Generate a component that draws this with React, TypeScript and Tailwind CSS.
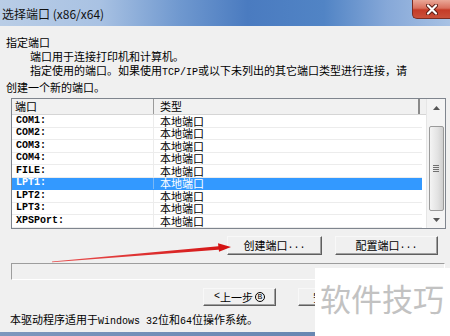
import React from "react";

const cjk = '"Noto Sans CJK SC", "Liberation Sans", sans-serif';

const ports = ["COM1:", "COM2:", "COM3:", "COM4:", "FILE:", "LPT1:", "LPT2:", "LPT3:", "XPSPort:"];

const Mono = ({ children }: { children: React.ReactNode }) => (
  <span className="font-['Liberation_Mono',monospace] text-[10px]">{children}</span>
);

const WinButton = ({ children, className = "" }: { children: React.ReactNode; className?: string }) => (
  <div
    className={`flex items-center justify-center bg-[#f0f0f0] border border-t-[#f8f8f8] border-l-[#f8f8f8] border-r-[#5f5f5f] border-b-[#5f5f5f] shadow-[inset_-1px_-1px_0_#a0a0a0] text-[11px] leading-none ${className}`}
  >
    {children}
  </div>
);

export default function App() {
  return (
    <div
      className="relative w-[450px] h-[336px] overflow-hidden bg-[#f0f0f0] flex flex-col text-black"
      style={{ fontFamily: cjk }}
    >
      {/* title bar */}
      <div className="h-[26px] flex justify-between bg-[linear-gradient(to_right,#b9cde6_0%,#a9c2e3_22%,#6f98cf_40%,#4a7bc0_55%,#5184c5_72%,#86a8d8_86%,#a8c2e4_100%)]">
        <div className="pl-[2px] pt-[6px] text-[12px] leading-[16px] text-[#111]">选择端口 (x86/x64)</div>
        <div className="w-[38px] h-[19px] rounded-bl-[5px] border border-t-0 border-r-0 border-[#7b2c22] bg-[linear-gradient(to_bottom,#eaa898_0%,#d9705e_45%,#c53b27_55%,#c9503a_100%)] flex items-center justify-center">
          <svg width="12" height="11" viewBox="0 0 12 11">
            <path d="M2 1.5 L10 9.5 M10 1.5 L2 9.5" stroke="#5a1a12" strokeWidth="4" strokeLinecap="round" />
            <path d="M2 1.5 L10 9.5 M10 1.5 L2 9.5" stroke="#ffffff" strokeWidth="2.2" strokeLinecap="round" />
          </svg>
        </div>
      </div>

      <div className="px-[6px] pt-[9px] flex flex-col">
        <div className="text-[11px] leading-[14px]">
          <div>指定端口</div>
          <div className="pl-[24px]">端口用于连接打印机和计算机。</div>
          <div className="pl-[24px] whitespace-nowrap">
            指定使用的端口。如果使用<Mono>TCP/IP</Mono>或以下未列出的其它端口类型进行连接，请
          </div>
          <div>创建一个新的端口。</div>
        </div>

        {/* list box */}
        <div className="mt-[4px] ml-[5px] w-[435px] h-[131px] border border-[#7f858e] bg-white flex">
          <div className="flex-1 flex flex-col">
            <div className="h-[16px] flex bg-[#f1f1f1] border-b border-[#d5d5d5] text-[11px] leading-[15px]">
              <div className="w-[142px] pl-[3px] border-r border-[#9a9a9a]">端口</div>
              <div className="w-[266px] pl-[6px] border-r-2 border-[#8a8a8a]">类型</div>
            </div>
            {ports.map((p) => {
              const sel = p === "LPT1:";
              return (
                <div
                  key={p}
                  className={`h-[12.5px] flex border-b w-[410px] text-[11px] leading-[12px] ${sel ? "bg-[#3399ff] text-white border-[#3399ff]" : "border-[#ececec]"}`}
                >
                  <div className={`w-[142px] pl-[4px] flex items-center border-r ${sel ? "border-[#7ab8f5]" : "border-[#ececec]"}`}>
                    <span className="font-['Liberation_Mono',monospace] text-[10px] leading-[12px] font-bold">{p}</span>
                  </div>
                  <div className="flex-1 pl-[6px] flex items-center">本地端口</div>
                </div>
              );
            })}
          </div>
          {/* scrollbar */}
          <div className="w-[19px] bg-[#f4f4f4] border-l border-[#e6e6e6] flex flex-col items-center">
            <div className="h-[17px] flex items-center justify-center">
              <svg width="7" height="4" viewBox="0 0 7 4">
                <path d="M0 4 L3.5 0 L7 4 Z" fill="#555" />
              </svg>
            </div>
            <div className="mt-[10px] w-[15px] h-[85px] rounded-[2px] border border-[#9a9a9a] bg-[linear-gradient(to_right,#f4f4f4,#e2e2e2_60%,#cfcfcf)] flex items-center justify-center">
              <div className="flex flex-col gap-[1px]">
                <div className="w-[6px] h-px bg-[#707070]" />
                <div className="w-[6px] h-px bg-[#707070]" />
                <div className="w-[6px] h-px bg-[#707070]" />
                <div className="w-[6px] h-px bg-[#707070]" />
              </div>
            </div>
            <div className="flex-1 flex items-center justify-center">
              <svg width="7" height="4" viewBox="0 0 7 4">
                <path d="M0 0 L7 0 L3.5 4 Z" fill="#555" />
              </svg>
            </div>
          </div>
        </div>

        {/* port buttons */}
        <div className="mt-[7px] flex justify-end gap-[13px] pr-[6px]">
          <WinButton className="w-[95px] h-[19px]">
            创建端口<Mono>...</Mono>
          </WinButton>
          <WinButton className="w-[103px] h-[19px]">
            配置端口<Mono>...</Mono>
          </WinButton>
        </div>

        {/* status box */}
        <div className="mt-[8px] ml-[5px] w-[434px] h-[17px] border border-t-[#9d9d9d] border-l-[#9d9d9d] border-r-white border-b-white" />

        {/* wizard buttons */}
        <div className="mt-[8px] ml-[197px] flex gap-[22px]">
          <WinButton className="w-[73px] h-[18px]">
            <Mono>&lt; </Mono>上一步<span className="ml-[2px] inline-flex w-[10px] h-[10px] rounded-full border border-black items-center justify-center font-['Liberation_Mono',monospace] text-[8px] leading-none">B</span>
          </WinButton>
          <WinButton className="w-[73px] h-[18px] justify-start pl-[14px]">安</WinButton>
        </div>

        <div className="mt-[6px] ml-[4px] text-[11px] leading-[14px] whitespace-nowrap">
          本驱动程序适用于<Mono>Windows 32</Mono>位和<Mono>64</Mono>位操作系统。
        </div>
      </div>

      <div className="mt-auto h-[4px] bg-[linear-gradient(to_right,#7d97bd,#5f80ad)]" />

      {/* watermark */}
      <div className="absolute left-[315px] top-[268px] right-0 bottom-0 bg-white">
        <div className="pl-[5px] pt-[12px] text-[31px] leading-[36px] text-[#c2c2c2] whitespace-nowrap">软件技巧</div>
      </div>

      {/* red arrow */}
      <svg className="absolute inset-0 pointer-events-none" width="450" height="336" viewBox="0 0 450 336">
        <defs>
          <linearGradient id="arr" x1="52" y1="261" x2="230" y2="247" gradientUnits="userSpaceOnUse">
            <stop offset="0" stopColor="#e85050" />
            <stop offset="1" stopColor="#d41414" />
          </linearGradient>
        </defs>
        <polygon points="52,261.5 221,246 221.4,249.6 52,262.3" fill="url(#arr)" />
        <polygon points="218,243.2 231,247 219,251.8" fill="#d41414" />
      </svg>
    </div>
  );
}
